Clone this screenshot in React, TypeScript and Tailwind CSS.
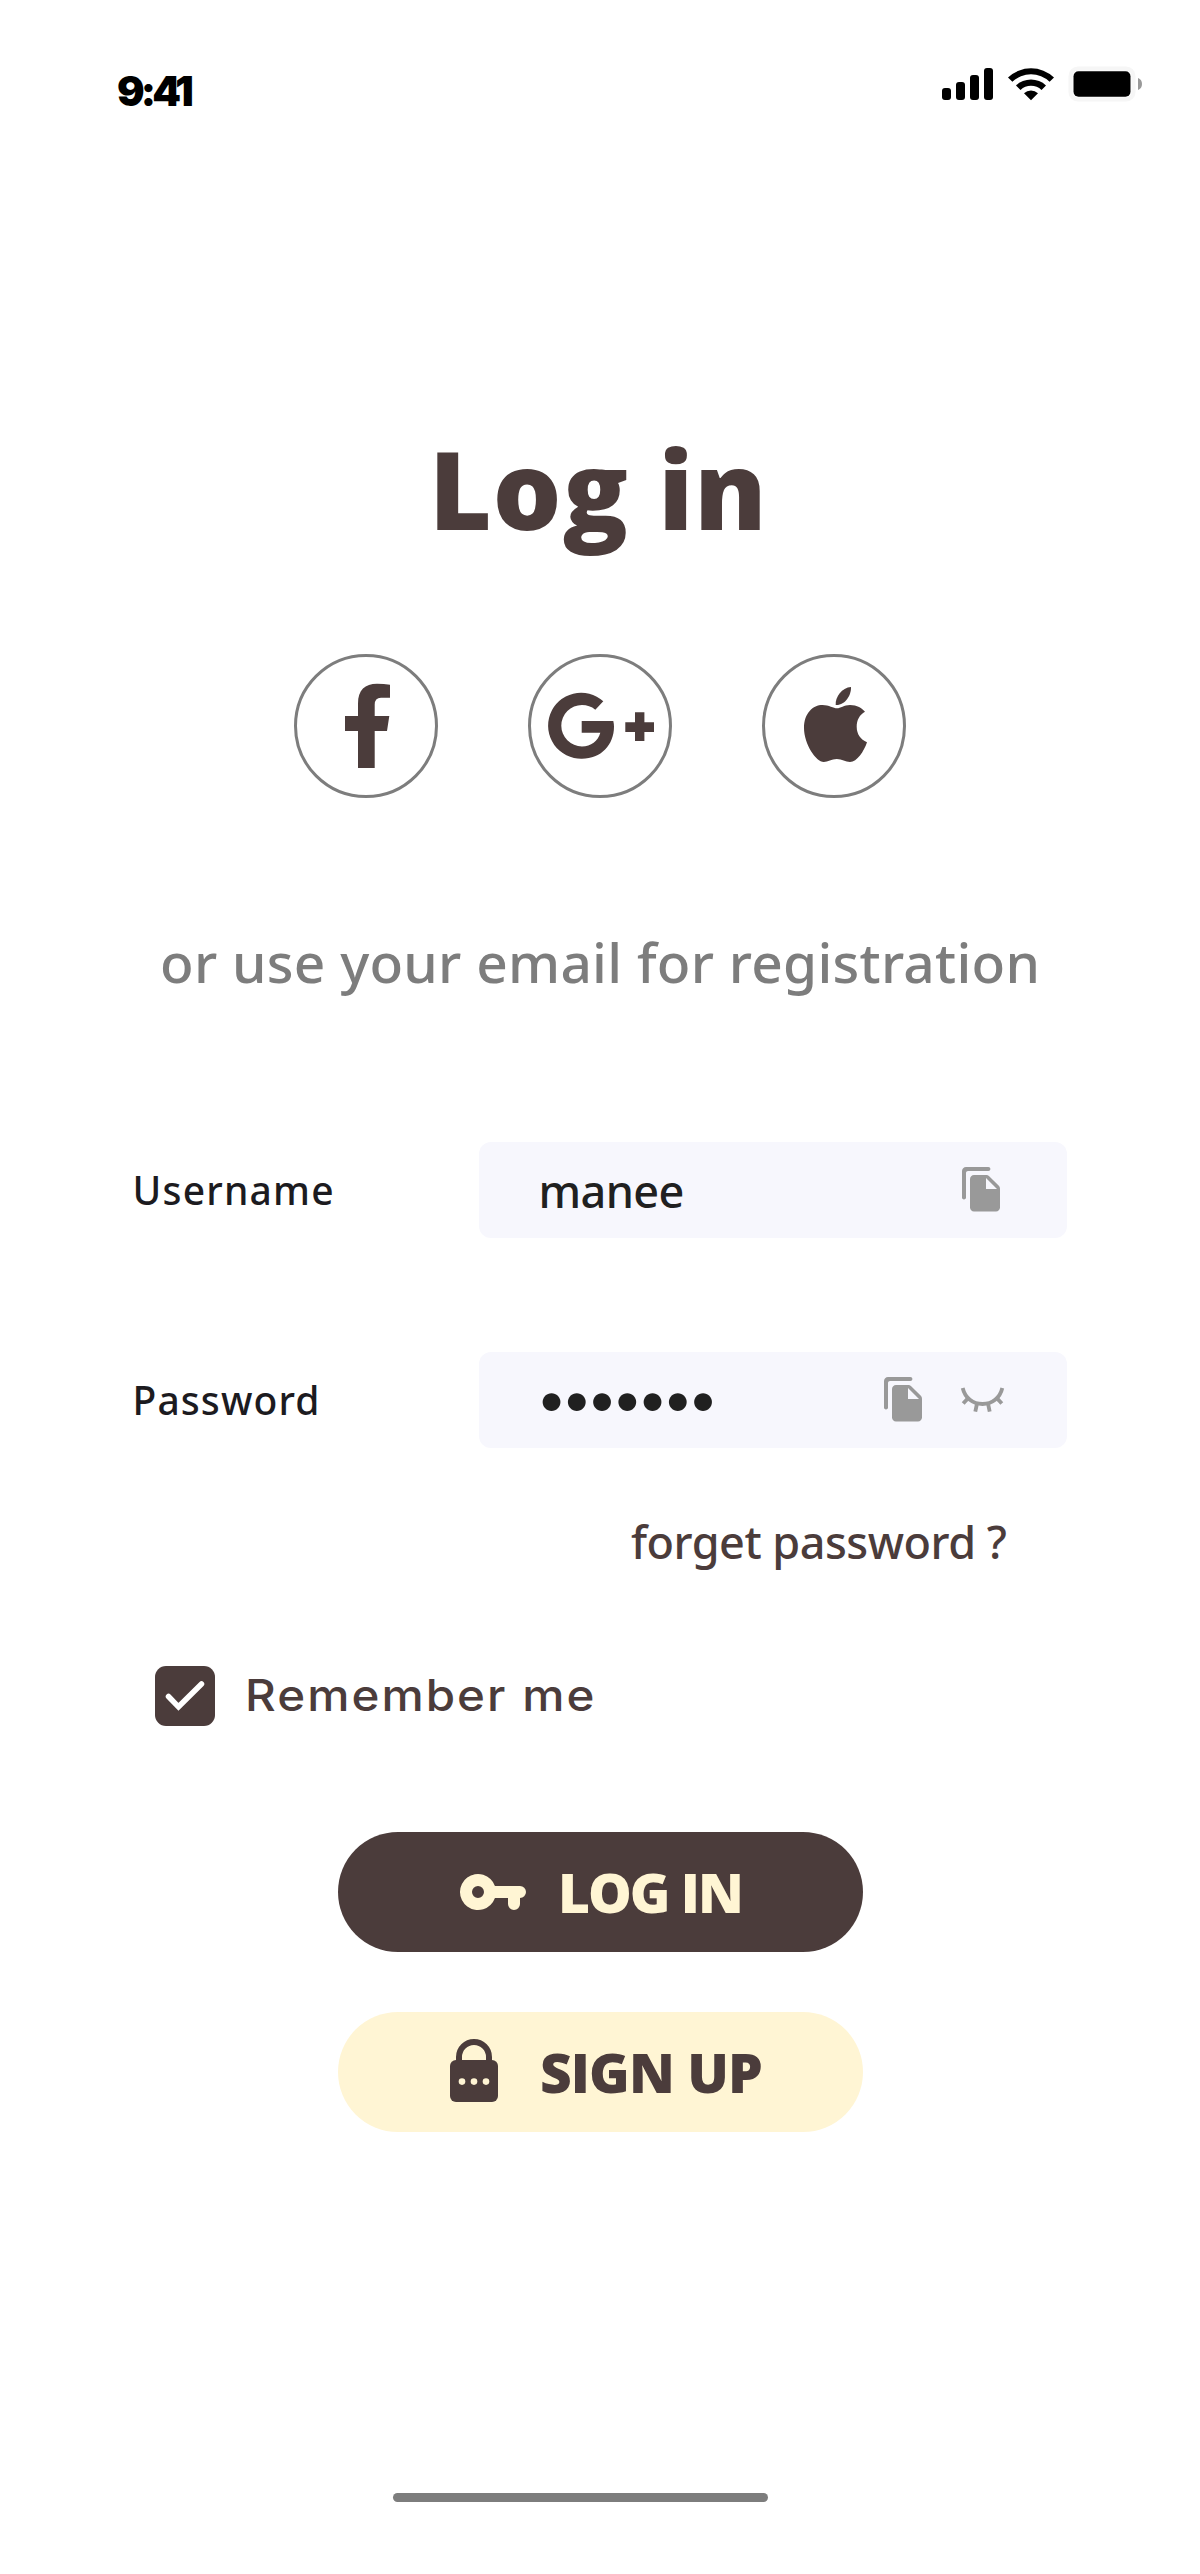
import React from "react";

const sans = "font-['Noto_Sans','Open_Sans',sans-serif]";

function StatusIcons() {
  return (
    <svg className="block h-[40px] w-[204px]" viewBox="0 0 204 40" aria-hidden="true">
      <rect x="4" y="24" width="9" height="12" rx="3" />
      <rect x="18" y="18" width="9" height="18" rx="3" />
      <rect x="32" y="11" width="9" height="25" rx="3" />
      <rect x="46" y="4" width="9" height="32" rx="3" />
      <path d="M70 13.400a33.500 33.500 0 0 1 46 0l-4.400 4.400a27 27 0 0 0-37.200 0z" />
      <path d="M78 21.400a22 22 0 0 1 30 0l-4.500 4.500a15.500 15.500 0 0 0-21 0z" />
      <path d="M86 29.200a10.500 10.500 0 0 1 14 0L93 36.300z" />
      <rect x="132.500" y="4.500" width="63" height="31" rx="7.500" fill="none" stroke="#f6f6f6" strokeWidth="4" />
      <rect x="135.500" y="7.200" width="57" height="25.600" rx="5" />
      <path d="M200 14v12c2.700-1 4-3.300 4-6s-1.300-5-4-6z" fill="#999" />
    </svg>
  );
}

function Social({ label, children }: { label: string; children: React.ReactNode }) {
  return (
    <button aria-label={label} className="block size-[144px]">
      <svg viewBox="0 0 144 144" className="block size-full" fill="#4b3c3b">
        <circle cx="72" cy="72" r="70.500" fill="none" stroke="#7d7d7d" strokeWidth="3" />
        {children}
      </svg>
    </button>
  );
}

function CopyIcon() {
  return (
    <svg viewBox="0 0 24 24" className="block size-[48px]" fill="#999">
      <path d="M15 1H4c-1.100 0-2 .9-2 2v13.200c0 .55.45 1 1 1s1-.45 1-1V4c0-.55.45-1 1-1h10.200c.55 0 1-.45 1-1s-.45-1-1-1z" />
      <path
        fillRule="evenodd"
        d="M15.590 5.590l4.830 4.830c.37.37.58.88.58 1.410V21.200c0 1.100-.9 2-2 2H8c-1.100 0-2-.9-2-2V7c0-1.100.9-2 2-2h6.170c.53 0 1.040.21 1.420.59zM14 12h5.500L14 6.500z"
      />
    </svg>
  );
}

function ClosedEyeIcon() {
  return (
    <svg viewBox="0 0 48 48" className="block size-[48px]" fill="none" stroke="#999" strokeWidth="3.800">
      <path d="M4.700 13C7 23 15 29 24.500 29S42 23 44.300 13" />
      <path d="M9.800 23.400l-4.600 5.200M18.900 29l-1.600 7.700M30.100 29l1.600 7.700M39.200 23.400l4.600 5.200" />
    </svg>
  );
}

function Field({ label, labelClass, value, icons }: { label: string; labelClass: string; value: React.ReactNode; icons: React.ReactNode }) {
  return (
    <div className="flex h-[96px] items-center">
      <label className={`w-[346px] text-[39px] leading-[96px] font-medium text-[#1c1b1f] ${labelClass}`}>{label}</label>
      <div className="flex h-[96px] w-[588px] items-center rounded-[12px] bg-[#f7f7fd] pr-[61px] pl-[59px]">
        <div className="flex-1 text-[#202020]">{value}</div>
        <div className="flex gap-[30px] pb-[1px]">{icons}</div>
      </div>
    </div>
  );
}

export default function App() {
  return (
    <main className={`flex h-[2574px] w-[1200px] flex-col overflow-hidden bg-white ${sans}`}>
      <header className="flex h-[130px] items-start justify-between pr-[58px] pl-[117px]">
        <span className="pt-[60.5px] font-[Inter] text-[41px] leading-[60px] font-black tracking-[-3.8px] text-black">9:41</span>
        <div className="pt-[64px]">
          <StatusIcons />
        </div>
      </header>

      <h1 className="mt-[288.5px] pl-[429px] font-['Open_Sans'] text-[108px] leading-[140px] font-extrabold tracking-[1px] whitespace-nowrap text-[#4b3c3b]">
        Log in
      </h1>

      <div className="mt-[95.5px] flex justify-center gap-[90px]">
        <Social label="Facebook">
          <path d="M96 30.700v13h-9q-6.300 0-6.300 7V62h14.600L93 77H80.700v37H64V77H51V62h13V49.500c0-13.500 7-19.800 19-19.800q7 0 13 1z" />
        </Social>
        <Social label="Google Plus">
          <path d="M75.300 47.300A33 33 0 1 0 54 104.700C73 104.700 86 91 86 72.500Q86 70 85.300 67H53.700v11.700h18.600C70 87 63 92.400 54 92.400A20.700 20.700 0 1 1 54 51c5 0 9.500 1.500 13.300 4.700z" />
          <path d="M107 58.300h9.400v10h9.600V78h-9.600v9H107v-9h-9.700v-9.700h9.700z" />
        </Social>
        <Social label="Apple">
          <path d="M89 33c.5 8-6 18.500-15.300 18C73 43 80 33.500 89 33z" />
          <path d="M75 54.300C78.500 54.300 82 51 88 51c7 0 12 3 15 6.800-5.500 3.200-8.300 8.200-8.300 14.900 0 7.300 3.800 12.800 10.300 15.500C102 97 95 108 88 108c-4.500 0-8-3-13.200-3-5.300 0-8.800 3-13 3C54 108 42 90 42 74 42 59 51 51 60.500 51c6.500 0 11 3.300 14.500 3.300z" />
        </Social>
      </div>

      <p className="mt-[123.5px] pl-[160px] text-[55px] leading-[80px] font-medium tracking-[0.27px] whitespace-nowrap text-[#7d7d7d]">
        or use your email for registration
      </p>

      <form className="mt-[140px] flex flex-col pl-[132.5px]">
        <Field
          label="Username"
          labelClass="tracking-[1.2px]"
          value={<span className="block pt-[3px] pl-[1px] text-[45px] leading-[60px] font-medium tracking-[-0.6px]">manee</span>}
          icons={<CopyIcon />}
        />
        <div className="h-[114px]" />
        <Field
          label="Password"
          labelClass="tracking-[1.1px]"
          value={<span className="-mt-[2px] -ml-[2px] block font-[Inter] text-[57px] leading-[60px] tracking-[-6.8px]">•••••••</span>}
          icons={
            <>
              <CopyIcon />
              <ClosedEyeIcon />
            </>
          }
        />

        <a className="mt-[64px] pl-[498.5px] text-[45px] leading-[60px] font-medium tracking-[-0.5px] whitespace-nowrap text-[#4b3c3b]">
          forget password ?
        </a>

        <label className="mt-[94.5px] flex h-[60px] items-center pl-[22px]">
          <svg viewBox="0 0 60 60" className="block size-[60px]">
            <rect width="60" height="60" rx="11" fill="#4b3c3b" />
            <path d="M13.500 30.500l10 10.300L46.500 18" fill="none" stroke="#fff" strokeWidth="5.500" strokeLinecap="round" />
          </svg>
          <span className="-mt-[2px] ml-[30px] origin-left scale-x-[1.08] font-[Inter] text-[44px] leading-[60px] font-medium tracking-[1.9px] whitespace-nowrap text-[#4b3c3b]">
            Remember me
          </span>
        </label>
      </form>

      <div className="mt-[105.8px] flex flex-col items-center gap-[60px] font-['Open_Sans'] text-[55px] leading-[120px] font-extrabold whitespace-nowrap">
        <button className="flex h-[120px] w-[525px] items-center rounded-[60px] bg-[#4b3c3b] pl-[119.5px] text-[#fff5d4]">
          <svg viewBox="0 0 24 24" className="block size-[72px]" fill="currentColor">
            <path
              fillRule="evenodd"
              d="M12.650 10H21a2 2 0 0 1 0 4v2a2 2 0 0 1-4 0v-2h-4.350A6 6 0 1 1 12.650 10zM7 10a2 2 0 1 0 0 4 2 2 0 0 0 0-4z"
            />
          </svg>
          <span className="pt-[1px] pl-[29px] tracking-[-2px]">LOG IN</span>
        </button>
        <button className="flex h-[120px] w-[525px] items-center rounded-[60px] bg-[#fff5d4] pl-[100.5px] text-[#4b3c3b]">
          <svg viewBox="0 0 24 24" className="block size-[72px]" fill="currentColor">
            <path d="M7 9V7a5 5 0 0 1 10 0v2" fill="none" stroke="currentColor" strokeWidth="2" />
            <rect x="4" y="8" width="16" height="14" rx="2" />
            <g fill="#fff5d4">
              <circle cx="8" cy="15.200" r="1.100" />
              <circle cx="12" cy="15.200" r="1.100" />
              <circle cx="16" cy="15.200" r="1.100" />
            </g>
          </svg>
          <span className="pl-[30px] tracking-[-0.9px]">SIGN UP</span>
        </button>
      </div>

      <div className="mt-[361.200px] ml-[393px] h-[9px] w-[375px] rounded-full bg-[#7d7d7d]" />
    </main>
  );
}
